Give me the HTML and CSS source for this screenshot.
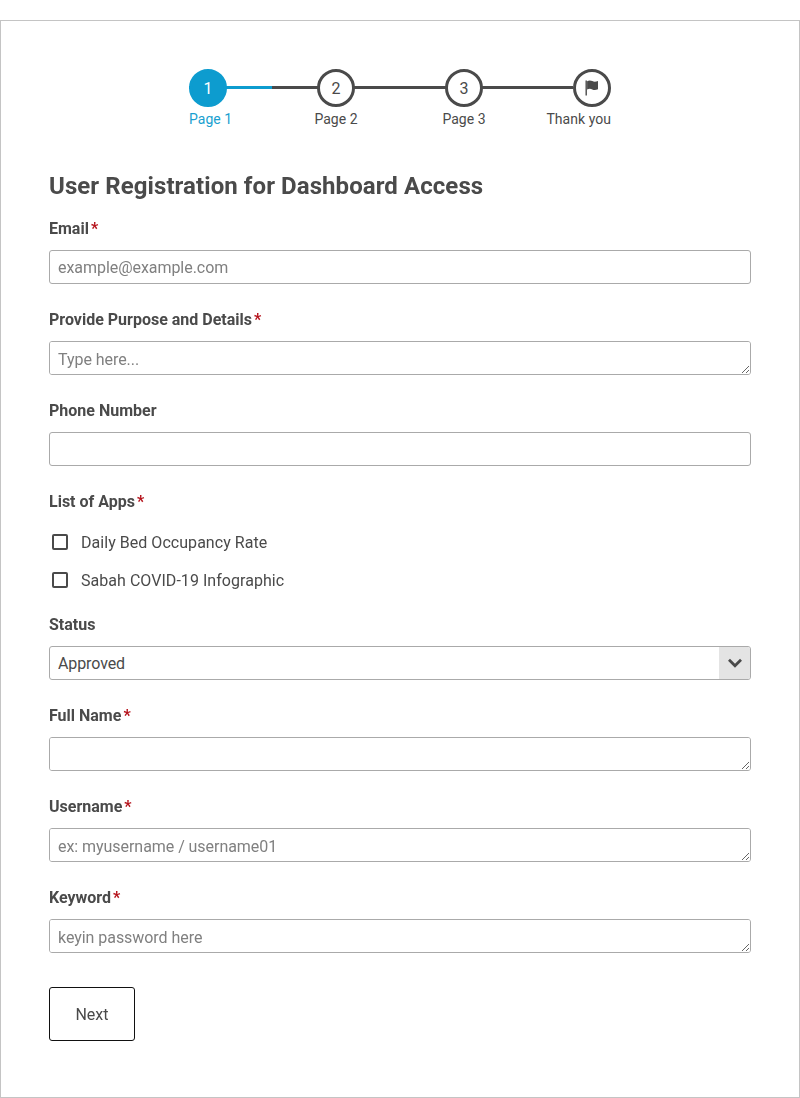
FILE: index.html
```html
<!DOCTYPE html>
<html lang="en">
<head>
  <meta charset="UTF-8" />
  <meta name="viewport" content="width=device-width, initial-scale=1.0"/>
  <title>User Registration for Dashboard Access</title>
  <link rel="stylesheet" href="styles.css">
</head>
<body>
  <form class="form-frame">
    <div class="stepper">
      <div class="step active">
        <div class="step-circle">1</div>
        <div class="step-label">Page 1</div>
      </div>
      <div class="step center">
        <div class="step-circle">2</div>
        <div class="step-label">Page 2</div>
      </div>
      <div class="step center">
        <div class="step-circle">3</div>
        <div class="step-label">Page 3</div>
      </div>
      <div class="step last">
        <div class="step-circle">
          <svg class="flag" viewBox="0 0 16 18" width="16" height="18">
            <path d="M1.500 1.500h1.400v15H1.500z" />
            <path d="M3.100 2.200c2-1 3.600-.8 5.200-.1 1.600.7 3.200.8 5.700-.1v8.300c-2.500.9-4.100.8-5.700.1-1.600-.7-3.200-.9-5.200.1z" />
          </svg>
        </div>
        <div class="step-label">Thank you</div>
      </div>
    </div>

    <h1>User Registration for Dashboard Access</h1>

    <div class="field">
      <label>Email<span class="req">*</span></label>
      <input type="text" placeholder="example@example.com" />
    </div>

    <div class="field">
      <label>Provide Purpose and Details<span class="req">*</span></label>
      <textarea placeholder="Type here..."></textarea>
    </div>

    <div class="field">
      <label>Phone Number</label>
      <input type="text" />
    </div>

    <div class="field checks">
      <label>List of Apps<span class="req">*</span></label>
      <div class="check-row"><span class="check-box"></span>Daily Bed Occupancy Rate</div>
      <div class="check-row"><span class="check-box"></span>Sabah COVID-19 Infographic</div>
    </div>

    <div class="field">
      <label>Status</label>
      <div class="select-wrap">
        <select>
          <option>Approved</option>
        </select>
        <span class="select-arrow">
          <svg viewBox="0 0 16 10" width="16" height="10">
            <path d="M2 1.800l6 6 6-6" fill="none" stroke="#4a4a4a" stroke-width="2.800" />
          </svg>
        </span>
      </div>
    </div>

    <div class="field">
      <label>Full Name<span class="req">*</span></label>
      <textarea></textarea>
    </div>

    <div class="field">
      <label>Username<span class="req">*</span></label>
      <textarea placeholder="ex: myusername / username01"></textarea>
    </div>

    <div class="field">
      <label>Keyword<span class="req">*</span></label>
      <textarea placeholder="keyin password here"></textarea>
    </div>

    <button type="button" class="next-btn">Next</button>
  </form>
</body>
</html>
```

FILE: styles.css
```css
* {
  box-sizing: border-box;
}

body {
  margin: 0;
  padding: 20px 0 0;
  font-family: Roboto, "Liberation Sans", sans-serif;
  font-size: 16px;
  letter-spacing: 0.04px;
  color: #4a4a4a;
  background: white;
}

.form-frame {
  display: block;
  height: 1078px;
  padding: 48px 48px 0;
  border: 1px solid #c4c4c4;
}

.stepper {
  display: flex;
  justify-content: center;
}

.step {
  position: relative;
  width: 128px;
  font-size: 14px;
}

.step::before {
  content: "";
  position: absolute;
  top: 17px;
  left: 0;
  width: 128px;
  height: 3px;
  background: #4a4a4a;
}

.step.active::after {
  content: "";
  position: absolute;
  top: 17px;
  left: 0;
  width: 83px;
  height: 3px;
  background: #0d9ccf;
}

.step.last {
  width: 38px;
}

.step.last::before {
  display: none;
}

.step-circle {
  position: relative;
  z-index: 1;
  display: flex;
  align-items: center;
  justify-content: center;
  width: 38px;
  height: 38px;
  border: 3px solid #4a4a4a;
  border-radius: 50%;
  background: white;
  font-size: 16px;
}

.step.active .step-circle {
  border-color: #0d9ccf;
  background: #0d9ccf;
  color: white;
}

.flag {
  fill: #4a4a4a;
}

.step-label {
  margin-top: 2px;
  line-height: 20px;
  white-space: nowrap;
}

.step.active .step-label {
  color: #1a9fd0;
}

.step.center .step-label {
  width: 38px;
  display: flex;
  justify-content: center;
}

.step.last .step-label {
  display: flex;
  justify-content: flex-end;
}

h1 {
  margin: 40px 0 16px;
  font-size: 24px;
  line-height: 34px;
  font-weight: 700;
  letter-spacing: 0.08px;
}

.field {
  margin-bottom: 26px;
}

.field label {
  display: block;
  margin-bottom: 11px;
  line-height: 20px;
  font-weight: 700;
  letter-spacing: 0;
}

.req {
  margin-left: 2px;
  color: #b5121b;
}

input,
textarea,
select {
  display: block;
  width: 100%;
  height: 34px;
  padding: 6px 8px;
  border: 1px solid #aaa;
  border-radius: 3px;
  background: white;
  color: #4a4a4a;
  font-family: inherit;
  font-size: 16px;
  line-height: 20px;
  letter-spacing: -0.05px;
  outline: none;
}

textarea {
  padding-top: 8px;
}

input::placeholder,
textarea::placeholder {
  color: #808080;
  opacity: 1;
}

select {
  appearance: none;
  padding-top: 7px;
  padding-bottom: 5px;
  letter-spacing: -0.1px;
}

.select-wrap {
  position: relative;
}

.select-arrow {
  position: absolute;
  top: 1px;
  right: 1px;
  bottom: 1px;
  display: flex;
  align-items: center;
  justify-content: center;
  width: 31px;
  background: #e4e4e4;
  border-radius: 0 2px 2px 0;
}

.checks {
  margin-bottom: 25px;
}

.checks label {
  margin-bottom: 20px;
}

.check-row {
  display: flex;
  align-items: center;
  height: 20px;
  margin-bottom: 18px;
  padding-left: 3px;
}

.check-row:last-child {
  margin-bottom: 0;
}

.check-box {
  width: 16px;
  height: 16px;
  margin-right: 13px;
  border: 2px solid #4a4a4a;
  border-radius: 2px;
}

.next-btn {
  display: block;
  width: 86px;
  height: 54px;
  margin-top: 34px;
  border: 1px solid #111;
  border-radius: 3px;
  background: white;
  color: #4a4a4a;
  font-family: inherit;
  font-size: 16px;
}
```
